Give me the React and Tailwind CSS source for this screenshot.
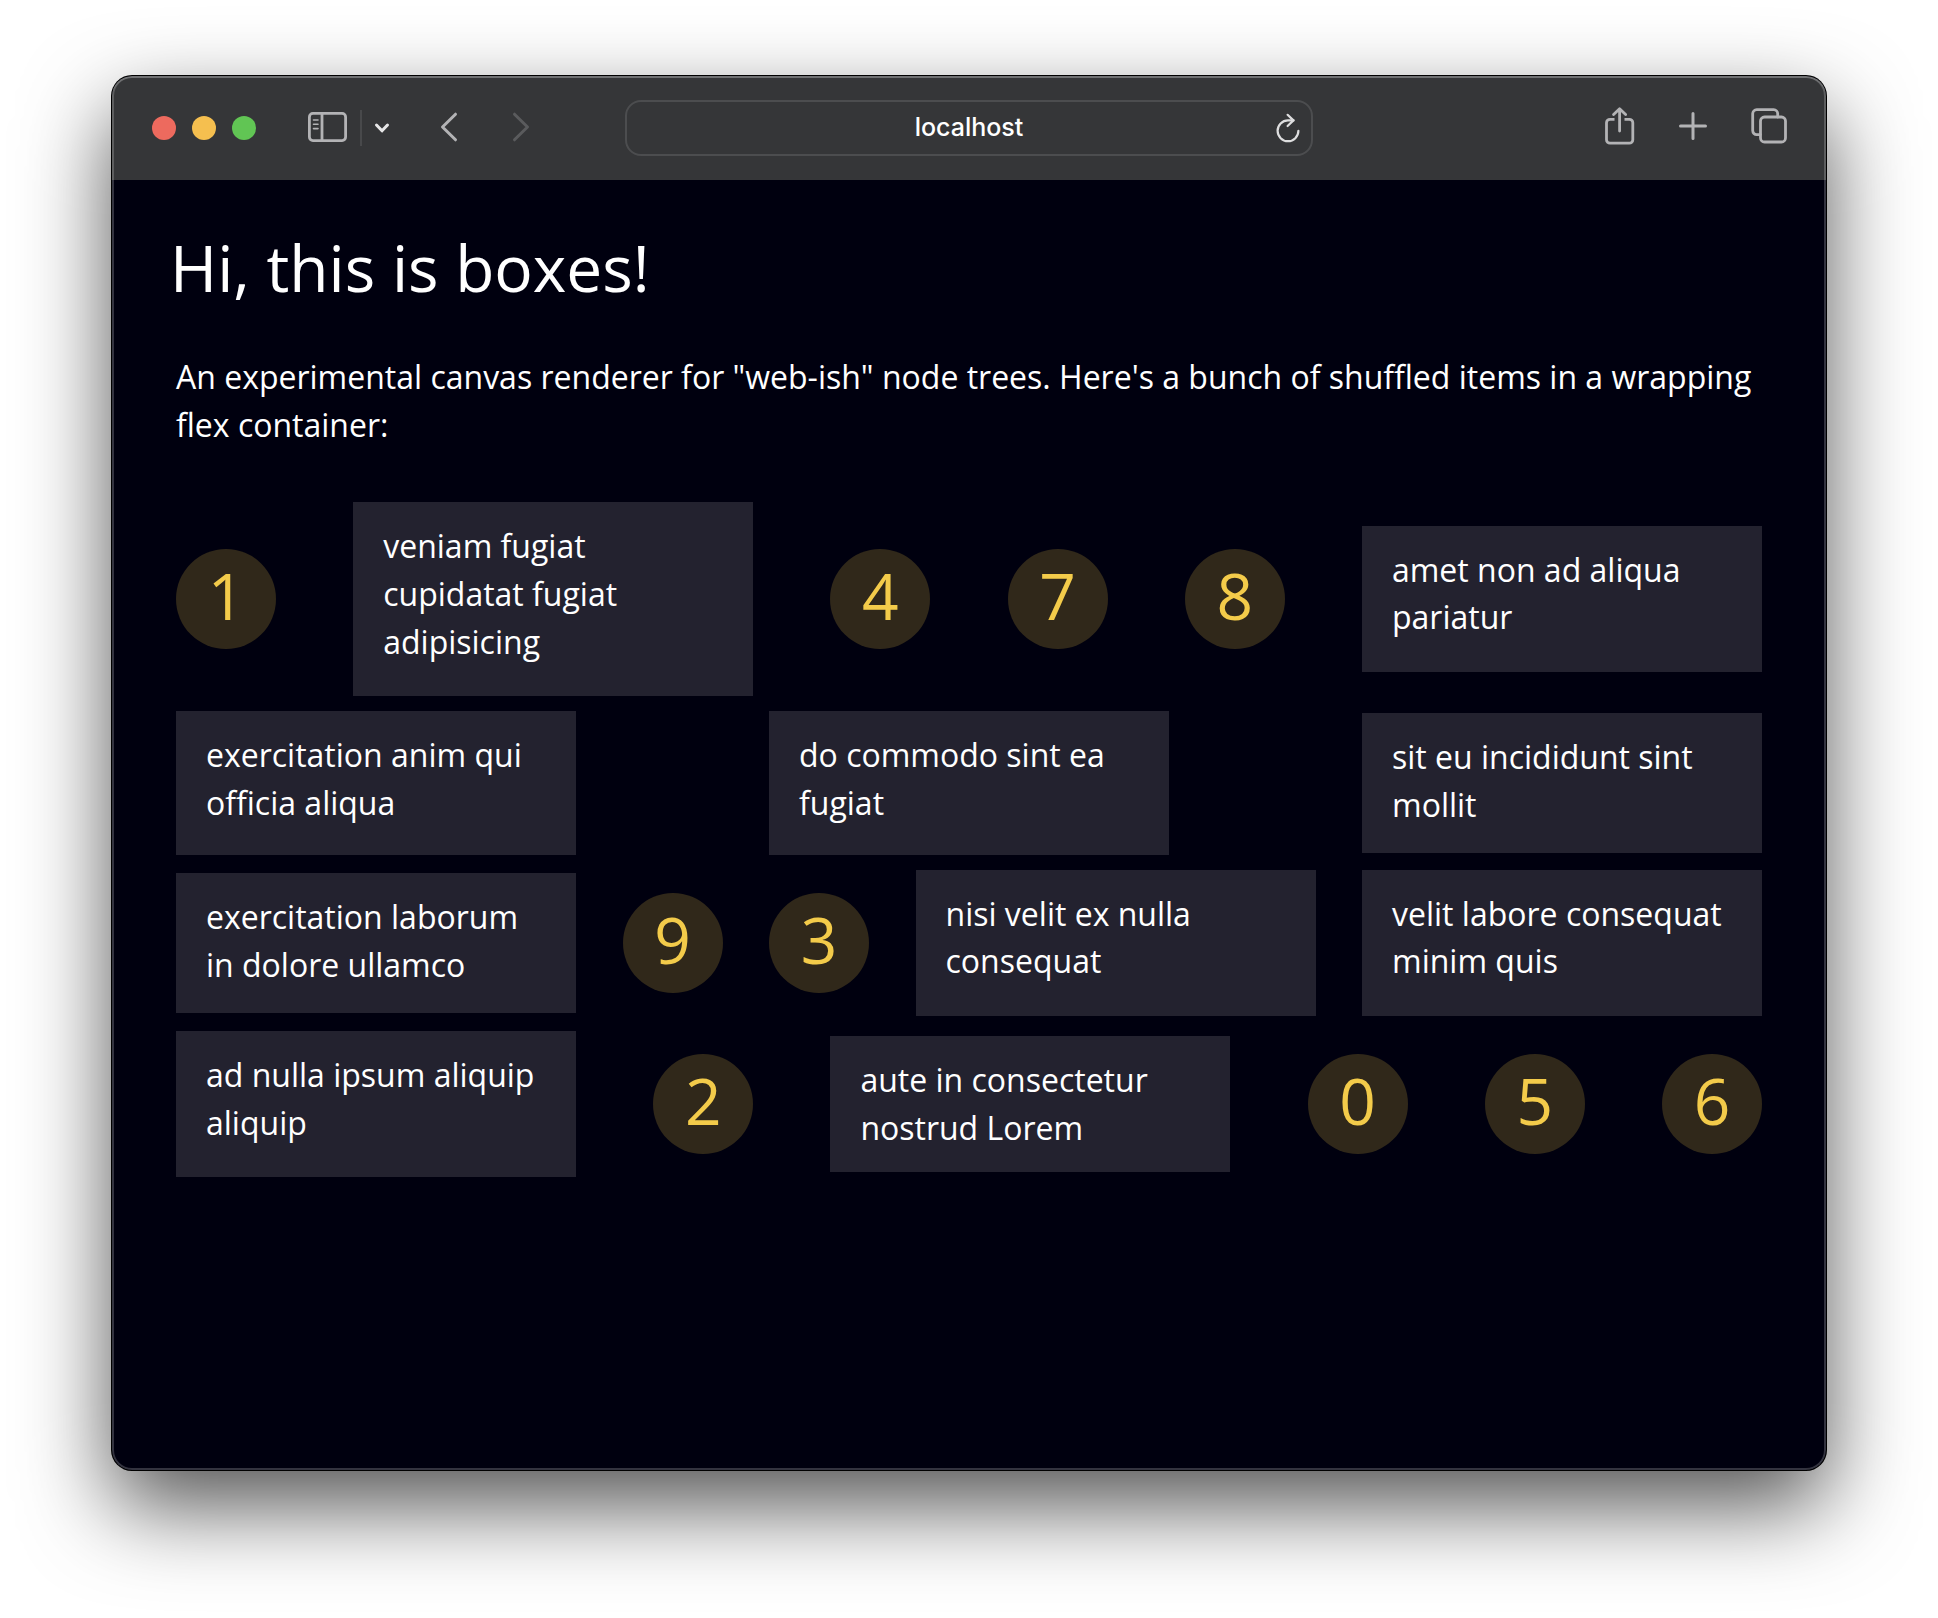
import React from "react";

const items = [
  { n: 1 },
  { t: "veniam fugiat cupidatat fugiat adipisicing", c: "pb-[30px] pr-24 leading-[48px]" },
  { n: 4 },
  { n: 7 },
  { n: 8 },
  { t: "amet non ad aliqua pariatur", c: "pb-8 pr-8 leading-[47px]" },
  { t: "exercitation anim qui officia aliqua", c: "pb-7 pr-8 leading-[48px]" },
  { t: "do commodo sint ea fugiat", c: "pb-7 pr-8 leading-[48px]" },
  { t: "sit eu incididunt sint mollit", c: "pb-6 pr-8 leading-[48px]" },
  { t: "exercitation laborum in dolore ullamco", c: "pb-6 pr-8 leading-[48px]" },
  { n: 9 },
  { n: 3 },
  { t: "nisi velit ex nulla consequat", c: "pb-8 pr-8 leading-[47px]" },
  { t: "velit labore consequat minim quis", c: "pb-8 pr-8 leading-[47px]" },
  { t: "ad nulla ipsum aliquip aliquip", c: "pb-[30px] pr-8 leading-[48px]" },
  { n: 2 },
  { t: "aute in consectetur nostrud Lorem", c: "pb-5 pr-8 leading-[48px]" },
  { n: 0 },
  { n: 5 },
  { n: 6 },
];

function Stroke({ w, h, sw = 2.8, children, className = "" }) {
  return (
    <svg
      width={w}
      height={h}
      viewBox={`0 0 ${w} ${h}`}
      fill="none"
      stroke="currentColor"
      strokeWidth={sw}
      strokeLinecap="round"
      strokeLinejoin="round"
      aria-hidden="true"
      className={className}
    >
      {children}
    </svg>
  );
}

function Toolbar() {
  return (
    <header className="grid h-[104px] shrink-0 grid-cols-[513fr_688fr_513fr] items-center bg-[#353638] text-[#b3b3b5]">
      <div className="flex items-center pl-10">
        <div className="flex gap-4">
          <button aria-label="Close" className="size-6 rounded-full bg-[#ed6a5e]" />
          <button aria-label="Minimize" className="size-6 rounded-full bg-[#f5bf4f]" />
          <button aria-label="Zoom" className="size-6 rounded-full bg-[#61c554]" />
        </div>
        <button aria-label="Sidebar" className="ml-[52px] pb-0.5">
          <Stroke w={39} h={30}>
            <rect x="1.4" y="1.4" width="36.2" height="27.2" rx="3.5" />
            <path d="M14 1.5v27" />
            <path d="M5.5 8h4.5M5.5 12.3h4.5M5.5 16.6h4.5" strokeWidth="1.6" />
          </Stroke>
        </button>
        <div className="ml-[13px] h-9 w-0.5 bg-[#48494b]" />
        <button aria-label="Sidebar menu" className="ml-3 text-[#e6e6e7]">
          <Stroke w={16} h={12} sw={3}>
            <path d="M2.5 3l5.5 5.8L13.5 3" />
          </Stroke>
        </button>
        <button aria-label="Back" className="ml-[50px] pb-0.5">
          <Stroke w={18} h={30} sw={3}>
            <path d="M15.5 2.2L2.5 15l13 12.8" />
          </Stroke>
        </button>
        <button aria-label="Forward" className="ml-[54px] pb-0.5 text-[#5a5b5d]">
          <Stroke w={18} h={30} sw={3}>
            <path d="M2.5 2.2L15.5 15l-13 12.8" />
          </Stroke>
        </button>
      </div>

      <div className="flex h-14 items-center rounded-2xl border-2 border-[#4c4d4f] pr-[11px] pl-[35px]">
        <input
          aria-label="Address"
          defaultValue="localhost"
          className="min-w-0 flex-1 bg-transparent text-center font-['Inter',sans-serif] text-[25px] font-medium text-white outline-none"
        />
        <button aria-label="Reload" className="text-[#dededf]">
          <Stroke w={24} h={30} sw={2.2}>
            <path d="M22.4 17.8A10.4 10.4 0 1 1 12 7.4h5.6" />
            <path d="M11.6 1.8l5.8 5.6-5.8 5.6" />
          </Stroke>
        </button>
      </div>

      <div className="flex items-center justify-end pr-[39px]">
        <button aria-label="Share" className="pb-1">
          <Stroke w={31} h={38}>
            <path d="M10.5 12.3H6a3.5 3.5 0 0 0-3.5 3.5v16.9A3.5 3.5 0 0 0 6 36.2h19.3a3.5 3.5 0 0 0 3.5-3.5V15.8a3.5 3.5 0 0 0-3.5-3.5h-4.8" strokeLinecap="butt" />
            <path d="M15.6 24V2M9.6 7.6l6-5.9 6 5.9" />
          </Stroke>
        </button>
        <button aria-label="New tab" className="ml-11 pb-1">
          <Stroke w={28} h={28} sw={3}>
            <path d="M14 1.5v25M1.5 14h25" />
          </Stroke>
        </button>
        <button aria-label="Tab overview" className="ml-11 pb-1">
          <Stroke w={36} h={36}>
            <rect x="9.5" y="9" width="25" height="25" rx="4" />
            <path d="M9.3 26.6H5.7a4 4 0 0 1-4-4V5.7a4 4 0 0 1 4-4h17a4 4 0 0 1 4 4V9" />
          </Stroke>
        </button>
      </div>
    </header>
  );
}

export default function App() {
  return (
    <div className="flex min-h-screen bg-white px-28 pt-[76px] pb-[148px]">
      <div className="relative flex flex-1 flex-col overflow-hidden rounded-[20px] bg-[#00000f] shadow-[0_0_0_1px_#000,0_36px_88px_rgba(0,0,0,0.68)]">
        <Toolbar />
        <main className="flex-1 px-16 pt-12 pb-16 font-['Open_Sans',sans-serif] text-[32px] text-white">
          <h1 className="-ml-1.5 text-[64px] leading-[80px]">Hi, this is boxes!</h1>
          <p className="mt-[45px] leading-[48px]">
            An experimental canvas renderer for "web-ish" node trees. Here's a bunch of shuffled
            items in a wrapping flex container:
          </p>
          <div className="mt-[53px] flex flex-wrap items-center justify-between gap-y-[15px]">
            {items.map((item) =>
              item.t ? (
                <div key={item.t} className={`w-[400px] bg-[#23222f] pt-5 pl-[30px] ${item.c}`}>
                  {item.t}
                </div>
              ) : (
                <div
                  key={item.n}
                  className="flex size-[100px] items-center justify-center rounded-full bg-[#30281a] pb-1.5 text-[64px] text-[#f3cb4a]"
                >
                  {item.n}
                </div>
              ),
            )}
          </div>
        </main>
        <div className="pointer-events-none absolute inset-0 rounded-[20px] shadow-[inset_0_0_0_2px_rgba(255,255,255,0.2),inset_0_2px_0_rgba(255,255,255,0.12)]" />
      </div>
    </div>
  );
}
